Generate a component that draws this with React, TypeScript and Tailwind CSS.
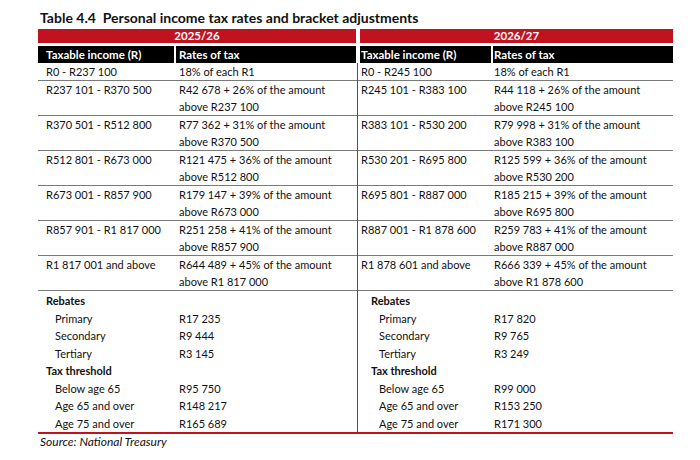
import React from 'react';

type Bracket = { range: string; rate: string[] };

const left: Bracket[] = [
    { range: 'R0 - R237 100', rate: ['18% of each R1'] },
    { range: 'R237 101 - R370 500', rate: ['R42 678 + 26% of the amount', 'above R237 100'] },
    { range: 'R370 501 - R512 800', rate: ['R77 362 + 31% of the amount', 'above R370 500'] },
    { range: 'R512 801 - R673 000', rate: ['R121 475 + 36% of the amount', 'above R512 800'] },
    { range: 'R673 001 - R857 900', rate: ['R179 147 + 39% of the amount', 'above R673 000'] },
    { range: 'R857 901 - R1 817 000', rate: ['R251 258 + 41% of the amount', 'above R857 900'] },
    { range: 'R1 817 001 and above', rate: ['R644 489 + 45% of the amount', 'above R1 817 000'] },
];

const right: Bracket[] = [
    { range: 'R0 - R245 100', rate: ['18% of each R1'] },
    { range: 'R245 101 - R383 100', rate: ['R44 118 + 26% of the amount', 'above R245 100'] },
    { range: 'R383 101 - R530 200', rate: ['R79 998 + 31% of the amount', 'above R383 100'] },
    { range: 'R530 201 - R695 800', rate: ['R125 599 + 36% of the amount', 'above R530 200'] },
    { range: 'R695 801 - R887 000', rate: ['R185 215 + 39% of the amount', 'above R695 800'] },
    { range: 'R887 001 - R1 878 600', rate: ['R259 783 + 41% of the amount', 'above R887 000'] },
    { range: 'R1 878 601 and above', rate: ['R666 339 + 45% of the amount', 'above R1 878 600'] },
];

const leftExtras = {
    rebates: [['Primary', 'R17 235'], ['Secondary', 'R9 444'], ['Tertiary', 'R3 145']],
    threshold: [['Below age 65', 'R95 750'], ['Age 65 and over', 'R148 217'], ['Age 75 and over', 'R165 689']],
};

const rightExtras = {
    rebates: [['Primary', 'R17 820'], ['Secondary', 'R9 765'], ['Tertiary', 'R3 249']],
    threshold: [['Below age 65', 'R99 000'], ['Age 65 and over', 'R153 250'], ['Age 75 and over', 'R171 300']],
};

const Half: React.FC<{
    year: string;
    rows: Bracket[];
    extras: typeof leftExtras;
    side: 'left' | 'right';
}> = ({ year, rows, extras, side }) => {
    const isLeft = side === 'left';
    const col1 = isLeft ? 'w-[138px] pl-[8px]' : 'w-[134px] pl-[3px]';
    const col2 = isLeft ? 'pl-[3px]' : 'pl-[2px]';
    const subCol = isLeft ? 'w-[138px] pl-[17px]' : 'w-[134px] pl-[21px]';
    const label = isLeft ? 'pl-[8px]' : 'pl-[13px]';

    return (
        <div className={isLeft ? 'w-[320px] flex flex-col' : 'w-[315px] flex flex-col'}>
            {/* headers */}
            <div className={isLeft ? 'mr-[2px]' : 'ml-[2px]'}>
                <div className="h-[14px] bg-[#c1121f] text-white font-bold text-[11.5px] leading-[14px] text-center">
                    {year}
                </div>
                <div className="h-[3px]" />
                <div className="flex h-[17px] text-white font-bold text-[11.5px] leading-[17px]">
                    <div className={isLeft ? 'w-[136px] bg-black pl-[8px]' : 'w-[131px] bg-black pl-[1px]'}>
                        Taxable income (R)
                    </div>
                    <div className="w-[2px]" />
                    <div className={isLeft ? 'flex-1 bg-black pl-[3px]' : 'flex-1 bg-black pl-[1px]'}>Rates of tax</div>
                </div>
            </div>

            {/* body */}
            <div
                className={
                    isLeft
                        ? 'border-r border-[#555] text-[11px] leading-[17px] text-[#111]'
                        : 'text-[11px] leading-[17px] text-[#111]'
                }
            >
                {rows.map((r) => (
                    <div key={r.range} className="flex border-b border-[#7a7a7a]">
                        <div className={col1}>{r.range}</div>
                        <div className={`flex-1 ${col2}`}>
                            {r.rate.map((l) => (
                                <div key={l}>{l}</div>
                            ))}
                        </div>
                    </div>
                ))}
                <div className="leading-[17.5px] pt-[1px]">
                    <div className={`font-bold ${label}`}>Rebates</div>
                    {extras.rebates.map(([a, b]) => (
                        <div key={a} className="flex">
                            <div className={subCol}>{a}</div>
                            <div className={col2}>{b}</div>
                        </div>
                    ))}
                    <div className={`font-bold ${label}`}>Tax threshold</div>
                    {extras.threshold.map(([a, b]) => (
                        <div key={a} className="flex">
                            <div className={subCol}>{a}</div>
                            <div className={col2}>{b}</div>
                        </div>
                    ))}
                </div>
            </div>
        </div>
    );
};

export default function App() {
    return (
        <div className="w-[700px] h-[460px] bg-white overflow-hidden font-['Lato',sans-serif] text-black">
            <h1 className="pl-[40px] pt-[9px] h-[29px] text-[14px] leading-[18px] font-bold text-[#111]">
                Table 4.4&nbsp; Personal income tax rates and bracket adjustments
            </h1>
            <div className="ml-[38px] w-[635px]">
                <div className="flex border-b-2 border-[#c1121f]">
                    <Half year="2025/26" rows={left} extras={leftExtras} side="left" />
                    <Half year="2026/27" rows={right} extras={rightExtras} side="right" />
                </div>
                <p className="pl-[2px] text-[12px] leading-[15px] italic text-[#111]">Source: National Treasury</p>
            </div>
        </div>
    );
}
